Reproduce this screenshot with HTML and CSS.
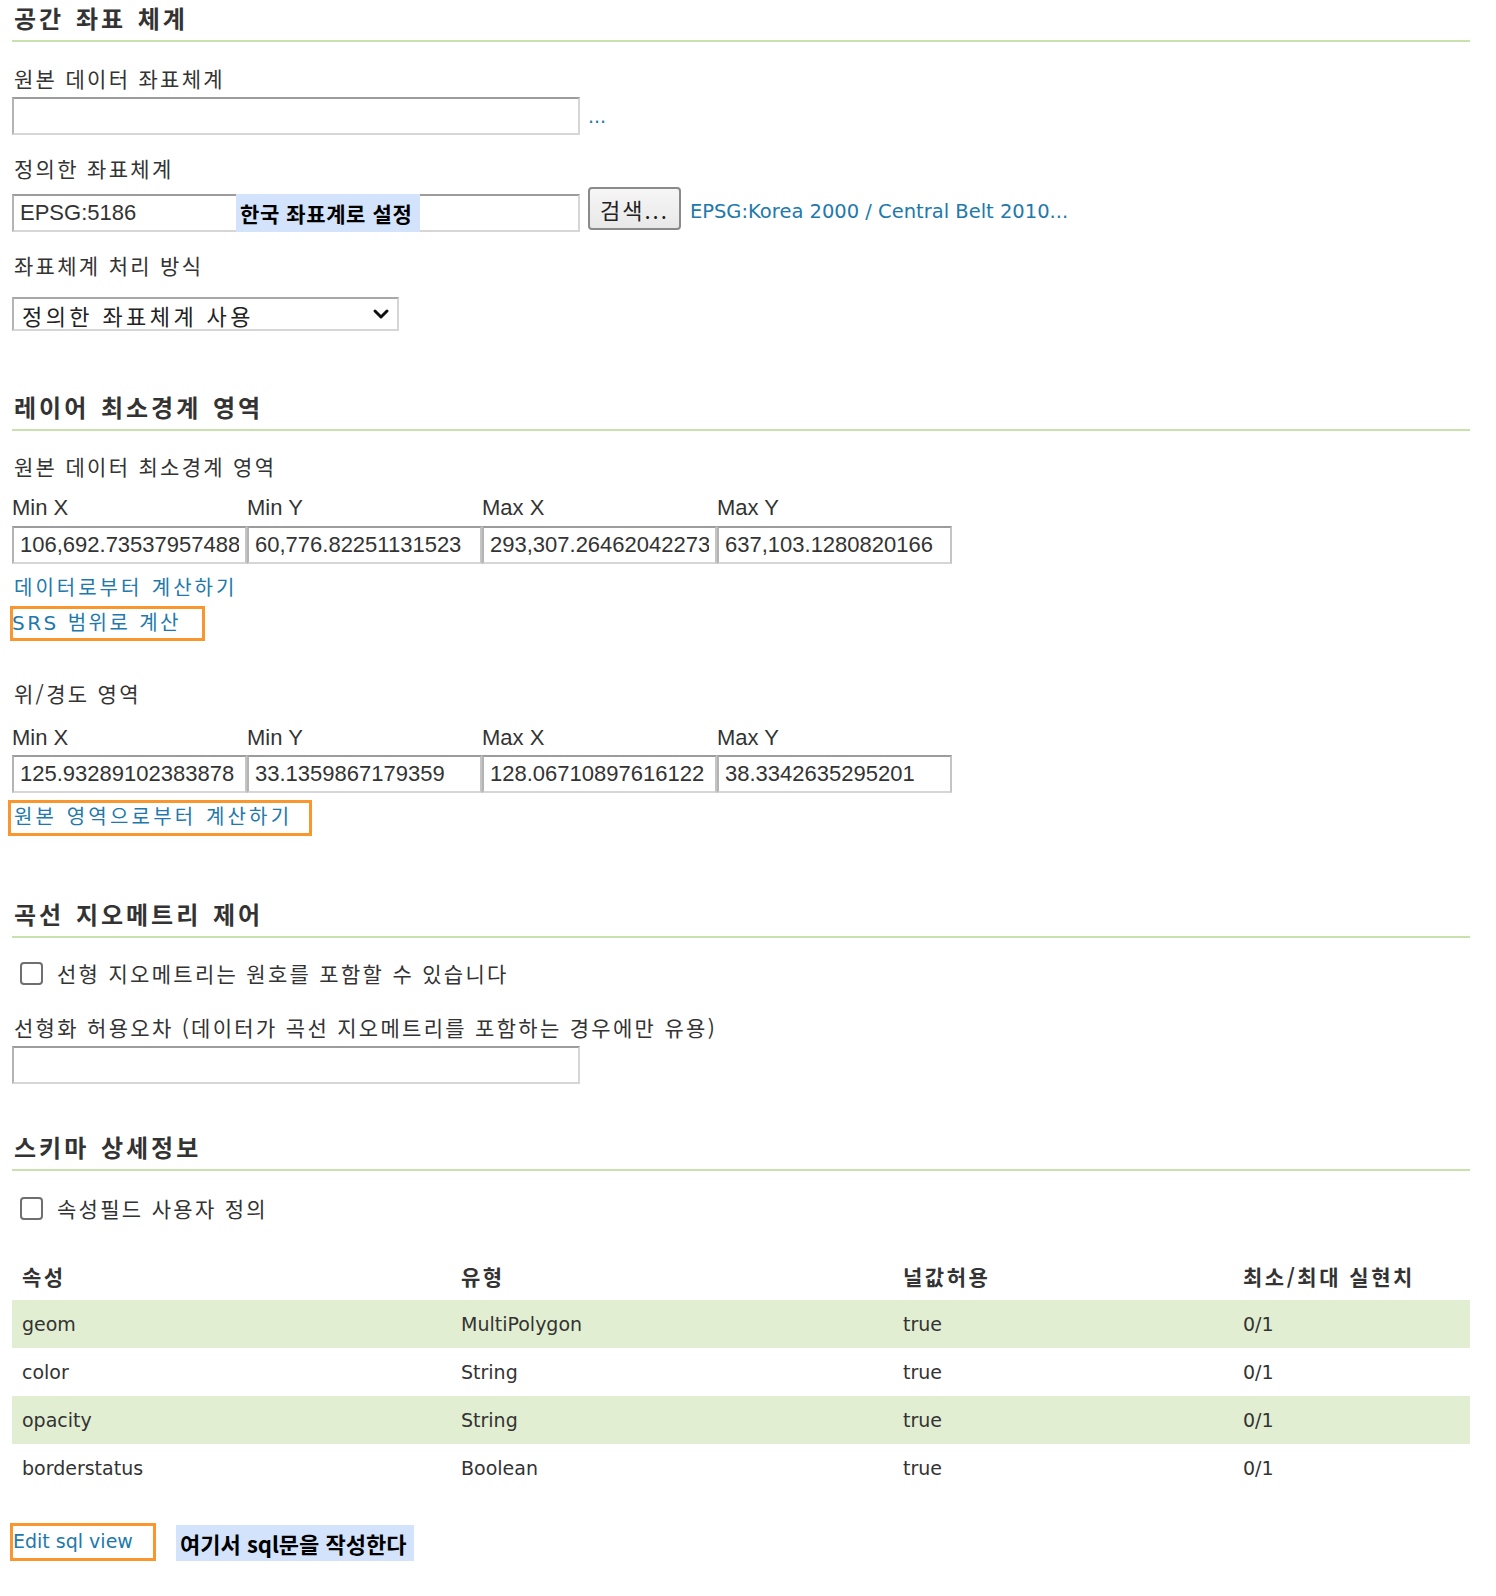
FILE: index.html
```html
<!DOCTYPE html>
<html lang="ko">
<head>
    <meta charset="UTF-8">
    <meta name="viewport" content="width=device-width, initial-scale=1.0">
    <title>레이어 편집</title>
    <link rel="stylesheet" href="styles.css">
</head>
<body>

<!-- 공간 좌표 체계 -->
<section class="group">
    <h2 class="group-title">공간 좌표 체계</h2>

    <div class="field-label first">원본 데이터 좌표체계</div>
    <div class="field-row">
        <input class="text-input wide" type="text">
        <a class="link dots" href="#">...</a>
    </div>

    <div class="field-label">정의한 좌표체계</div>
    <div class="field-row top">
        <span class="input-wrap">
            <input class="text-input wide shifted" type="text" value="EPSG:5186">
            <span class="tip">한국 좌표계로 설정</span>
        </span>
        <button class="btn" type="button">검색...</button>
        <a class="link srs-name" href="#">EPSG:Korea 2000 / Central Belt 2010...</a>
    </div>

    <div class="field-label">좌표체계 처리 방식</div>
    <span class="select-wrap">
        <select class="select">
            <option>정의한 좌표체계 사용</option>
            <option>원본 좌표체계 유지</option>
            <option>원본에서 정의한 좌표체계로 재투영</option>
        </select>
        <svg class="chevron" width="20" height="20" viewBox="0 0 20 20">
            <path d="M4 7 L10 13 L16 7" fill="none" stroke="#111" stroke-width="3" stroke-linecap="round" stroke-linejoin="round"/>
        </svg>
    </span>
</section>

<!-- 레이어 최소경계 영역 -->
<section class="group group-bbox">
    <h2 class="group-title">레이어 최소경계 영역</h2>

    <div class="field-label first-tight">원본 데이터 최소경계 영역</div>
    <div class="bbox native">
        <span class="bbox-label">Min X</span>
        <span class="bbox-label">Min Y</span>
        <span class="bbox-label">Max X</span>
        <span class="bbox-label">Max Y</span>
        <input class="text-input" type="text" value="106,692.73537957488">
        <input class="text-input" type="text" value="60,776.82251131523">
        <input class="text-input" type="text" value="293,307.26462042273">
        <input class="text-input" type="text" value="637,103.1280820166">
    </div>
    <a class="link block-link" href="#">데이터로부터 계산하기</a>
    <div class="mark mark-srs"><a class="link" href="#">SRS 범위로 계산</a></div>

    <div class="field-label latlon-label">위/경도 영역</div>
    <div class="bbox latlon">
        <span class="bbox-label">Min X</span>
        <span class="bbox-label">Min Y</span>
        <span class="bbox-label">Max X</span>
        <span class="bbox-label">Max Y</span>
        <input class="text-input" type="text" value="125.93289102383878">
        <input class="text-input" type="text" value="33.1359867179359">
        <input class="text-input" type="text" value="128.06710897616122">
        <input class="text-input" type="text" value="38.3342635295201">
    </div>
    <div class="mark mark-native"><a class="link" href="#">원본 영역으로부터 계산하기</a></div>
</section>

<!-- 곡선 지오메트리 제어 -->
<section class="group group-curves">
    <h2 class="group-title">곡선 지오메트리 제어</h2>

    <label class="check-row">
        <input class="check" type="checkbox">
        <span>선형 지오메트리는 원호를 포함할 수 있습니다</span>
    </label>

    <div class="field-label tolerance-label">선형화 허용오차 (데이터가 곡선 지오메트리를 포함하는 경우에만 유용)</div>
    <div class="field-row">
        <input class="text-input wide" type="text">
    </div>
</section>

<!-- 스키마 상세정보 -->
<section class="group group-schema">
    <h2 class="group-title">스키마 상세정보</h2>

    <label class="check-row">
        <input class="check" type="checkbox">
        <span>속성필드 사용자 정의</span>
    </label>

    <table class="attr-table">
        <colgroup>
            <col class="c1"><col class="c2"><col class="c3"><col class="c4">
        </colgroup>
        <thead>
            <tr><th>속성</th><th>유형</th><th>널값허용</th><th>최소/최대 실현치</th></tr>
        </thead>
        <tbody>
            <tr class="odd"><td>geom</td><td>MultiPolygon</td><td>true</td><td>0/1</td></tr>
            <tr><td>color</td><td>String</td><td>true</td><td>0/1</td></tr>
            <tr class="odd"><td>opacity</td><td>String</td><td>true</td><td>0/1</td></tr>
            <tr><td>borderstatus</td><td>Boolean</td><td>true</td><td>0/1</td></tr>
        </tbody>
    </table>

    <div class="sql-row">
        <div class="mark mark-sql"><a class="link" href="#">Edit sql view</a></div>
        <span class="tip tip-sql">여기서 sql문을 작성한다</span>
    </div>
</section>

</body>
</html>
```

FILE: styles.css
```css
/* --- Page --- */
body {
    margin: 0;
    padding: 0 26px 30px 12px;
    font-family: "Liberation Sans", "Noto Sans CJK KR", sans-serif;
    font-size: 20px;
    color: #333;
    background-color: #fff;
}

/* --- Group headings --- */
.group-title {
    margin: 0;
    font-family: "Noto Sans CJK KR", sans-serif;
    font-size: 24px;
    font-weight: 700;
    line-height: 36px;
    letter-spacing: 3px;
    word-spacing: 2px;
    color: #333;
    padding: 0 0 4px 2px;
    border-bottom: 2px solid #c9e2ad;
}

.group-bbox { margin-top: 58px; }
.group-curves { margin-top: 60px; }
.group-schema { margin-top: 45px; }

/* --- Labels & rows --- */
.field-label {
    font-family: "Noto Sans CJK KR", sans-serif;
    font-size: 21px;
    line-height: 28px;
    letter-spacing: 2.3px;
    margin-top: 19px;
    padding-left: 2px;
}
.field-label.first { margin-top: 22px; }
.field-label.first-tight { margin-top: 21px; }
.field-label.latlon-label { margin-top: 38px; }
.field-label.tolerance-label { margin-top: 26px; }

.field-row {
    display: flex;
    align-items: center;
    margin-top: 5px;
}
.field-row.top { align-items: flex-start; }

/* --- Inputs --- */
.text-input {
    box-sizing: border-box;
    height: 38px;
    margin: 0;
    padding: 0 6px;
    font-family: "Liberation Sans", sans-serif;
    font-size: 22px;
    color: #333;
    background: #fff;
    border: 2px solid #d6d6d6;
    border-top-color: #9c9c9c;
    border-left-color: #b4b4b4;
    outline: none;
}
.text-input.wide { width: 568px; }
.text-input.shifted { margin-top: 7px; }

.input-wrap {
    position: relative;
    display: inline-block;
}

/* annotation boxes drawn over the form */
.tip {
    position: absolute;
    top: 7px;
    left: 224px;
    width: 184px;
    height: 38px;
    box-sizing: border-box;
    padding-left: 4px;
    background-color: #d2e3fb;
    color: #000;
    font-family: "Noto Sans CJK KR", sans-serif;
    font-size: 21px;
    font-weight: 700;
    letter-spacing: 0.6px;
    line-height: 38px;
    white-space: nowrap;
}

.btn {
    box-sizing: border-box;
    height: 43px;
    margin-left: 8px;
    padding: 0 10px;
    font-family: "Noto Sans CJK KR", sans-serif;
    font-size: 22px;
    letter-spacing: 2px;
    color: #222;
    background: linear-gradient(#f6f6f6, #e8e8e8);
    border: 2px solid #8a8a8a;
    border-radius: 4px;
    cursor: pointer;
}

/* --- Links --- */
.link {
    font-family: "DejaVu Sans", "Noto Sans CJK KR", sans-serif;
    font-size: 19px;
    color: #2179ab;
    text-decoration: none;
    line-height: 28px;
}
.link.dots { margin-left: 8px; }
.link.srs-name { margin: 11px 0 0 9px; font-size: 19.5px; }

.block-link {
    display: block;
    margin-top: 10px;
    padding-left: 2px;
    font-size: 20px;
    letter-spacing: 3px;
}

.mark {
    box-sizing: border-box;
    border: 3px solid #f9962e;
}
.mark .link {
    display: block;
    white-space: nowrap;
}
.mark-srs {
    width: 195px;
    height: 35px;
    margin: 4px 0 0 -2px;
}
.mark-srs .link { line-height: 29px; margin-left: -1px; font-size: 20px; letter-spacing: 2.5px; }
.mark-native {
    width: 304px;
    height: 36px;
    margin: 7px 0 0 -4px;
}
.mark-native .link { line-height: 28px; padding-left: 3px; font-size: 20px; letter-spacing: 3.2px; }

/* --- Select --- */
.select-wrap {
    position: relative;
    display: inline-block;
    margin-top: 18px;
}
.select {
    appearance: none;
    -webkit-appearance: none;
    box-sizing: border-box;
    width: 387px;
    height: 34px;
    padding: 0 30px 0 8px;
    font-family: "Noto Sans CJK KR", sans-serif;
    font-size: 22px;
    letter-spacing: 3.4px;
    color: #222;
    background: #fff;
    border: 2px solid #d6d6d6;
    border-top-color: #a8a8a8;
    border-left-color: #b4b4b4;
    border-radius: 0;
}
.chevron {
    position: absolute;
    right: 8px;
    top: 7px;
    pointer-events: none;
}

/* --- Bounding box grid --- */
.bbox {
    display: grid;
    grid-template-columns: repeat(4, 235px);
    row-gap: 4px;
    margin-top: 14px;
}
.bbox.latlon { margin-top: 17px; row-gap: 3px; }
.bbox-label {
    line-height: 28px;
    font-size: 22px;
}
.bbox .text-input {
    width: 235px;
    padding-left: 6px;
    border-right-color: #c4c4c4;
}

/* --- Checkbox rows --- */
.check-row {
    display: flex;
    align-items: center;
    height: 28px;
    margin-top: 21px;
    font-family: "Noto Sans CJK KR", sans-serif;
    font-size: 21px;
    letter-spacing: 2.3px;
}
.group-schema .check-row { margin-top: 23px; }
.check {
    appearance: none;
    -webkit-appearance: none;
    box-sizing: border-box;
    width: 23px;
    height: 23px;
    margin: 0 14px 0 8px;
    border: 2px solid #6f6f6f;
    border-radius: 4px;
    background: #fff;
}

/* --- Attribute table --- */
.attr-table {
    width: 100%;
    margin-top: 29px;
    border-collapse: collapse;
    table-layout: fixed;
}
.attr-table .c1 { width: 439px; }
.attr-table .c2 { width: 442px; }
.attr-table .c3 { width: 340px; }
.attr-table th {
    height: 49px;
    padding: 0 0 0 10px;
    text-align: left;
    font-family: "Noto Sans CJK KR", sans-serif;
    font-size: 21px;
    font-weight: 700;
    letter-spacing: 2.5px;
    color: #333;
}
.attr-table td {
    height: 48px;
    padding: 0 0 0 10px;
    font-family: "DejaVu Sans", sans-serif;
    font-size: 19px;
    color: #333;
}
.attr-table tr.odd td { background-color: #e2eed1; }

/* --- Bottom row --- */
.sql-row {
    display: flex;
    align-items: flex-end;
    margin-top: 31px;
}
.mark-sql {
    width: 146px;
    height: 38px;
    margin-left: -2px;
}
.mark-sql .link { line-height: 30px; letter-spacing: 0; }
.tip.tip-sql {
    position: static;
    width: 238px;
    height: 36px;
    margin-left: 20px;
    line-height: 36px;
    font-size: 22px;
    letter-spacing: 0;
}
```
